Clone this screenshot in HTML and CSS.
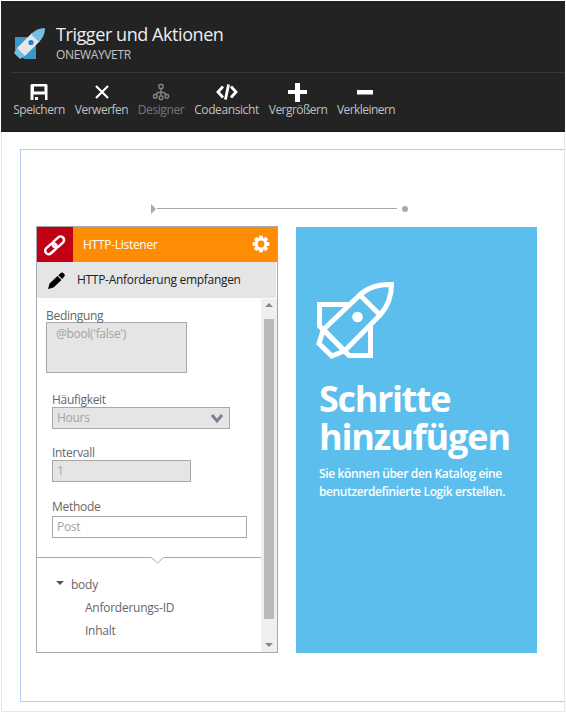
FILE: index.html
```html
<!DOCTYPE html>
<html lang="de">
<head>
<meta charset="utf-8">
<title>Trigger und Aktionen</title>
<link rel="stylesheet" href="styles.css">
</head>
<body>
<div class="app">
  <header class="header">
    <div class="brand">
      <svg class="logo" width="32" height="32" viewBox="0 0 32 32">
        <path d="M1 9h13L22 18v13H10L1 22z" fill="#3a97c9"/>
        <path d="M3 20L11 28 6 31 0 25z" fill="#74c0e0"/>
        <path d="M3 20L18 5 26 13 11 28z" fill="#e6e6e6"/>
        <path d="M17 6Q23 0 31 0 31 8 25 14z" fill="#74c0e0"/>
        <circle cx="17" cy="14.500" r="2.600" fill="#1f7fd0"/>
      </svg>
      <div>
        <h1 class="title">Trigger und Aktionen</h1>
        <p class="subtitle">ONEWAYVETR</p>
      </div>
    </div>
    <nav class="toolbar">
      <button class="tool save">
        <svg width="18" height="18" viewBox="0 0 18 18"><path fill="#fff" fill-rule="evenodd" d="M1.500 1h15l1 1v15H15v-5.500H3.500V17H.500V2zM4 3.500v5h10.500v-5zM5 14h3v3H5z"/></svg>
        <span>Speichern</span>
      </button>
      <button class="tool discard">
        <svg width="18" height="18" viewBox="0 0 18 18"><path stroke="#fff" stroke-width="2.200" d="M3 3L15 15M15 3L3 15"/></svg>
        <span>Verwerfen</span>
      </button>
      <button class="tool designer">
        <svg width="18" height="18" viewBox="0 0 18 18" fill="none" stroke="#858585" stroke-width="1.400"><rect x="7" y="1.500" width="4" height="4" rx="1"/><path d="M9 5.500v7M9 9.500H6L3.500 12M9 9.500h3L14.500 12"/><rect x="1.500" y="11.500" width="3.500" height="3.500" rx="1"/><rect x="7.300" y="13" width="3.500" height="3.500" rx="1"/><rect x="13" y="11.500" width="3.500" height="3.500" rx="1"/></svg>
        <span>Designer</span>
      </button>
      <button class="tool code">
        <svg width="22" height="18" viewBox="0 0 22 18" fill="none" stroke="#fff" stroke-width="2.800"><path d="M7 3.500L2 9 7 14.500M15 3.500L20 9 15 14.500M12.600 1.500L9.400 16.500"/></svg>
        <span>Codeansicht</span>
      </button>
      <button class="tool zoom-in">
        <svg width="20" height="20" viewBox="0 0 20 20"><path fill="#fff" d="M7 1h5v7h7v4h-7v8H7v-8H0v-4h7z"/></svg>
        <span>Vergrößern</span>
      </button>
      <button class="tool zoom-out">
        <svg width="18" height="18" viewBox="0 0 18 18"><path fill="#fff" d="M0 7h16v4.500H0z"/></svg>
        <span>Verkleinern</span>
      </button>
    </nav>
  </header>
  <main class="canvas">
    <div class="connector"><i class="arrow"></i><i class="line"></i><i class="dot"></i></div>
    <div class="cards">
      <section class="card">
        <div class="card-head">
          <div class="link-box">
            <svg width="24" height="24" viewBox="0 0 24 24" fill="none" stroke="#fff" stroke-width="2.500"><g transform="rotate(-42 12 12)"><rect x="0" y="8.500" width="13" height="7" rx="3.500"/><rect x="10" y="8.500" width="13" height="7" rx="3.500"/></g></svg>
          </div>
          <h2 class="card-title">HTTP-Listener</h2>
          <svg class="gear" width="18" height="18" viewBox="-9 -9 18 18"><g fill="#fff"><rect id="t" x="-1.900" y="-8.300" width="3.800" height="16.600"/><use href="#t" transform="rotate(45)"/><use href="#t" transform="rotate(90)"/><use href="#t" transform="rotate(135)"/><circle r="6.300"/></g><circle r="3.400" fill="#ff8c05"/></svg>
        </div>
        <div class="card-action">
          <svg width="18" height="18" viewBox="0 0 18 18"><path d="M0 18L1.500 12.500 9.500 5 13.500 9 5.500 16.500zM10.300 4.200L13 1.800q1-.8 2 0l1.500 1.500q.8 1 0 2L14.200 8z"/></svg>
          <span>HTTP-Anforderung empfangen</span>
        </div>
        <div class="card-body">
          <div class="content">
            <form class="fields">
              <div class="field condition"><label>Bedingung</label><div class="box area">@bool('false')</div></div>
              <div class="field frequency"><label>Häufigkeit</label><div class="box select"><span>Hours</span><svg width="12" height="11" viewBox="0 0 12 11"><path d="M1 2L6 8 11 2" fill="none" stroke="#7d8094" stroke-width="3"/></svg></div></div>
              <div class="field interval"><label>Intervall</label><div class="box">1</div></div>
              <div class="field method"><label>Methode</label><div class="box">Post</div></div>
            </form>
            <svg class="divider" width="224" height="8" viewBox="0 0 224 8"><path d="M0 1.500h114.500l6 5.500 6-5.500H224" fill="none" stroke="#a7a7ac"/></svg>
            <ul class="tree">
              <li class="root"><i class="caret"></i><span>body</span></li>
              <li class="leaf">Anforderungs-ID</li>
              <li class="leaf">Inhalt</li>
            </ul>
          </div>
          <div class="scrollbar"><i class="up"></i><i class="thumb"></i><i class="down"></i></div>
        </div>
      </section>
      <section class="tile">
        <svg class="rocket" width="80" height="80" viewBox="0 0 80 80" fill="none" stroke="#fff" stroke-width="5"><path d="M7.500 49.500L46 13Q57 4 75.500 4.500 75.500 22 64.500 34.500L28.500 71z"/><path d="M44 15L64 35"/><path d="M32 24.500H3.500V46L33 75.500H54.500V46"/><path d="M7.500 49L3 63.500 15.800 76 28 71"/><circle cx="41.500" cy="37" r="5.300" fill="#fff" stroke="none"/></svg>
        <h2 class="tile-title"><span class="w1">Schritte</span><span class="w2">hinzufügen</span></h2>
        <p class="tile-text"><span class="l1">Sie können über den Katalog eine</span><span class="l2">benutzerdefinierte Logik erstellen.</span></p>
      </section>
    </div>
  </main>
</div>
</body>
</html>
```

FILE: styles.css
```css
* { box-sizing: border-box; }
body { margin: 0; background: #fff; font: 12px/16px "Open Sans", "Noto Sans", sans-serif; color: #666; }
h1, h2, p, ul { margin: 0; padding: 0; font-weight: 400; list-style: none; }
i { display: block; }
svg { display: block; flex: none; }
.app { margin: 1px; width: 564px; height: 711px; border: solid #e8e8e8; border-width: 0 1px 1px; }
.header { margin: 0 -1px; height: 131px; background: #232323; border-bottom: 1px solid #191919; }
.brand { display: flex; margin: 0 0 0 10px; height: 72px; padding: 21px 0 0 3px; border-bottom: 1px solid #383838; }
.logo { margin: 6px 10px 0 0; }
.title { height: 25px; font-size: 18px; line-height: 24px; color: #eee; white-space: nowrap; letter-spacing: -.43px; }
.subtitle { line-height: 16px; color: #c4c4c4; letter-spacing: -.35px; }
.toolbar { display: flex; gap: 10px; padding: 10px 0 0 12px; }
.tool { display: flex; flex-direction: column; align-items: center; justify-content: space-between; height: 34px; padding: 0; border: 0; background: none; color: #c0c0c0; font: inherit; line-height: 15px; white-space: nowrap; }
.tool span { margin: auto -4px 0; }
.save { width: 52px; letter-spacing: -.45px; }
.discard { width: 53px; letter-spacing: -.5px; }
.designer { width: 46px; letter-spacing: -.4px; color: #777; }
.code { width: 65px; letter-spacing: -.4px; }
.zoom-in { width: 58px; letter-spacing: -.55px; }
.zoom-out { width: 58px; letter-spacing: -.55px; }
.zoom-in svg { margin-top: -1px; }
.canvas { margin: 17px 0 0 18px; height: 553px; border: 1px solid #b3cdf2; border-right: 0; padding: 54px 0 0 15px; }
.connector { display: flex; align-items: center; height: 10px; padding-left: 115px; }
.arrow { border: solid transparent; border-width: 5px 0 5px 5px; border-left-color: #a7a7ac; }
.line { width: 240px; height: 1px; margin: 0 5px 1px 1px; background: #a7a7ac; }
.dot { width: 6px; height: 6px; border-radius: 3px; background: #a7a7ac; }
.cards { display: flex; align-items: flex-end; gap: 18px; margin-top: 12px; height: 427px; }
.card { width: 242px; height: 427px; border: 1px solid #a7a7ac; }
.card-head { display: flex; align-items: center; height: 35px; background: #ff8c05; color: #fff; }
.link-box { display: flex; align-items: center; justify-content: center; width: 36px; height: 35px; background: #c00015; }
.card-title { flex: 1; margin-left: 10px; font-size: 12px; letter-spacing: -.28px; }
.gear { margin: -2px 7px 0 0; }
.card-action { display: flex; align-items: center; gap: 11px; height: 36px; margin-right: 1px; padding-left: 11px; background: #e5e5e5; color: #222; white-space: nowrap; letter-spacing: -.3px; }
.card-body { display: flex; height: 354px; }
.content { width: 224px; }
.fields { height: 258px; padding: 10px 0 0 15px; }
.field label { display: block; height: 16px; line-height: 16px; letter-spacing: -.3px; }
.box { height: 22px; padding-left: 4px; border: 1px solid #a7a7ac; background: #e5e5e5; color: #a3a3a3; line-height: 20px; letter-spacing: -.3px; }
.condition { margin-left: -6px; }
.area { width: 141px; height: 51px; margin-top: -2px; padding-left: 9px; line-height: 22px; }
.frequency { margin-top: 18px; }
.frequency label { position: relative; top: 1px; }
.select { display: flex; justify-content: space-between; align-items: center; width: 178px; padding-right: 6px; }
.interval { margin-top: 16px; }
.interval .box { width: 139px; margin-top: -1px; }
.method { margin-top: 17px; }
.method .box { width: 195px; margin-top: 1px; background: #fff; }
.tree { padding: 9px 0 0 19px; }
.tree li { height: 23px; line-height: 23px; letter-spacing: -.25px; }
.root { display: flex; gap: 7px; }
.caret { height: 4px; margin-top: 8px; border: solid transparent; border-width: 4px 4px 0; border-top-color: #555; }
.tree .leaf { padding-left: 29px; }
.scrollbar { display: flex; flex-direction: column; align-items: center; justify-content: space-between; width: 16px; height: 353px; margin-top: 1px; padding: 4px 0 5px; background: #efefef; }
.up, .down { border: 4px solid transparent; }
.up { border-width: 0 4px 4px; border-bottom-color: #85889a; }
.down { border-width: 4px 4px 0; border-top-color: #85889a; }
.thumb { width: 10px; height: 300px; margin-bottom: 12px; background: #bababa; }
.tile { width: 241px; height: 426px; padding: 53px 0 0 20px; background: #5cbeec; color: #fff; }
.tile-title { margin: 20px 0 0 3px; font-size: 36px; line-height: 38px; font-weight: 700; }
.tile-title span, .tile-text span { display: block; white-space: nowrap; }
.w1 { letter-spacing: -1.350px; }
.w2 { letter-spacing: -1.150px; }
.tile-text { margin: 9px 0 0 3px; line-height: 18px; font-weight: 600; }
.l1 { letter-spacing: -.35px; }
.l2 { letter-spacing: -.4px; }
```
